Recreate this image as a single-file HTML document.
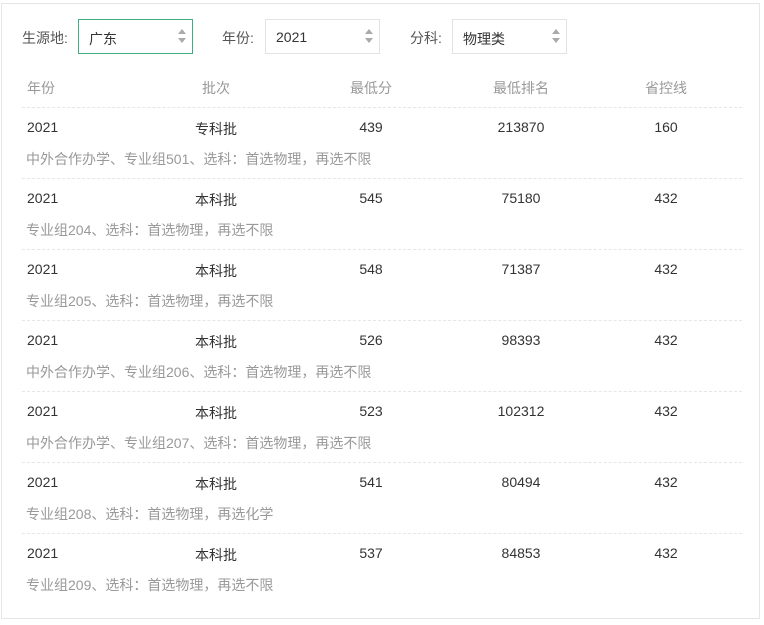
<!DOCTYPE html>
<html><head><meta charset="utf-8"><style>
*{margin:0;padding:0;box-sizing:border-box}
body{width:764px;height:625px;background:#fff;font-family:"Liberation Sans","Noto Sans CJK SC",sans-serif;font-size:14px;color:#333;position:relative;overflow:hidden}
.frame{position:absolute;left:1px;top:3px;width:759px;height:616px;border:1px solid #e6e6e6}
.lbl{position:absolute;top:28px;color:#555}
.sel{position:absolute;top:19px;width:115px;height:35px;border:1px solid #e3e3e3;padding:9px 0 0 10px;color:#333}
.sel.act{border-color:#3fae7c}
.arr{position:absolute;right:6px;top:9px;width:8px;height:16px}
.arr:before{content:"";position:absolute;left:0;top:0;border-left:4px solid transparent;border-right:4px solid transparent;border-bottom:5px solid #aaa}
.arr:after{content:"";position:absolute;left:0;top:9px;border-left:4px solid transparent;border-right:4px solid transparent;border-top:5px solid #aaa}
.t{position:absolute;white-space:nowrap}
.c{transform:translateX(-50%)}
.h{color:#999;top:78px}
.line{position:absolute;left:22px;width:720px;border-top:1px dashed #e6e6e6}
.sub{color:#999}
</style></head><body>
<div class="frame"></div>
<div class="lbl" style="left:22px">生源地:</div>
<div class="sel act" style="left:78px">广东<span class="arr"></span></div>
<div class="lbl" style="left:222px">年份:</div>
<div class="sel" style="left:265px">2021<span class="arr"></span></div>
<div class="lbl" style="left:410px">分科:</div>
<div class="sel" style="left:452px">物理类<span class="arr"></span></div>
<div class="t h" style="left:27px">年份</div>
<div class="t h c" style="left:216px">批次</div>
<div class="t h c" style="left:371px">最低分</div>
<div class="t h c" style="left:521px">最低排名</div>
<div class="t h c" style="left:666px">省控线</div>
<div class="line" style="top:107px"></div>
<div id="rows"></div>
<script>
var d=[["专科批","439","213870","160","中外合作办学、专业组501、选科：首选物理，再选不限"],
["本科批","545","75180","432","专业组204、选科：首选物理，再选不限"],
["本科批","548","71387","432","专业组205、选科：首选物理，再选不限"],
["本科批","526","98393","432","中外合作办学、专业组206、选科：首选物理，再选不限"],
["本科批","523","102312","432","中外合作办学、专业组207、选科：首选物理，再选不限"],
["本科批","541","80494","432","专业组208、选科：首选物理，再选化学"],
["本科批","537","84853","432","专业组209、选科：首选物理，再选不限"]];
var h="";d.forEach(function(r,i){var y=119+i*71;
h+='<div class="t" style="left:27px;top:'+y+'px">2021</div>';
h+='<div class="t c" style="left:216px;top:'+y+'px">'+r[0]+'</div>';
h+='<div class="t c" style="left:371px;top:'+y+'px">'+r[1]+'</div>';
h+='<div class="t c" style="left:521px;top:'+y+'px">'+r[2]+'</div>';
h+='<div class="t c" style="left:666px;top:'+y+'px">'+r[3]+'</div>';
h+='<div class="t sub" style="left:26px;top:'+(y+30)+'px">'+r[4]+'</div>';
if(i<6)h+='<div class="line" style="top:'+(178+i*71)+'px"></div>';});
document.getElementById("rows").innerHTML=h;
</script>
</body></html>
